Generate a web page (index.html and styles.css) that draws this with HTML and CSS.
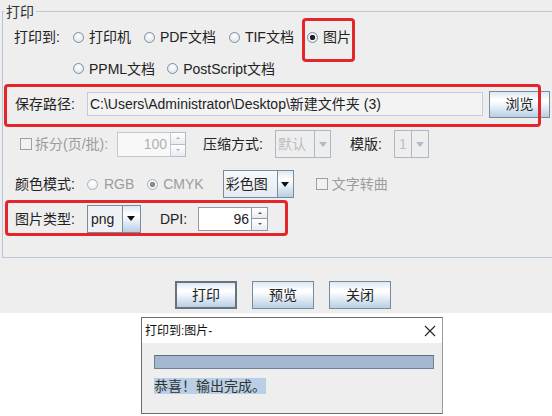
FILE: index.html
```html
<!DOCTYPE html>
<html>
<head>
<meta charset="utf-8">
<link rel="stylesheet" href="styles.css">
</head>
<body>
<div class="window">
  <div class="group">
    <div class="group-title">打印</div>
    <div class="row r1">
      <span class="label">打印到:</span>
      <span class="radio"><i></i>打印机</span>
      <span class="radio"><i></i>PDF文档</span>
      <span class="radio"><i></i>TIF文档</span>
      <span class="radio on"><i></i>图片</span>
    </div>
    <div class="row r2">
      <span class="radio"><i></i>PPML文档</span>
      <span class="radio"><i></i>PostScript文档</span>
    </div>
    <div class="row r3">
      <span class="label">保存路径:</span>
      <span class="field path">C:\Users\Administrator\Desktop\新建文件夹 (3)</span>
      <span class="btn browse">浏览</span>
    </div>
    <div class="row r4">
      <span class="check dis"><i></i>拆分(页/批):</span>
      <span class="spinner dis split"><span class="sp-field">100</span><span class="sp-btns"><b class="up"></b><b class="down"></b></span></span>
      <span class="label zip">压缩方式:</span>
      <span class="combo dis cb-zip"><span class="cb-main">默认</span><span class="cb-arrow"></span></span>
      <span class="label tpl">模版:</span>
      <span class="combo dis cb-tpl"><span class="cb-main">1</span><span class="cb-arrow"></span></span>
    </div>
    <div class="row r5">
      <span class="label">颜色模式:</span>
      <span class="radio dis rgb"><i></i>RGB</span>
      <span class="radio dis on cmyk"><i></i>CMYK</span>
      <span class="combo cb-color"><span class="cb-main">彩色图</span><span class="cb-arrow"></span></span>
      <span class="check dis curve"><i></i>文字转曲</span>
    </div>
    <div class="row r6">
      <span class="label">图片类型:</span>
      <span class="combo cb-png"><span class="cb-main">png</span><span class="cb-arrow"></span></span>
      <span class="label dpi">DPI:</span>
      <span class="spinner dpi-sp"><span class="sp-field">96</span><span class="sp-btns"><b class="up"></b><b class="down"></b></span></span>
    </div>
    <span class="mark m1"></span>
    <span class="mark m2"></span>
    <span class="mark m3"></span>
  </div>
  <div class="actions">
    <span class="btn act focus">打印</span>
    <span class="btn act">预览</span>
    <span class="btn act">关闭</span>
  </div>
</div>
<div class="desk">
  <div class="dialog">
    <div class="dlg-title">
      <span>打印到:图片-</span>
      <svg class="close" width="12" height="12" viewBox="0 0 12 12"><path d="M1 1L11 11M11 1L1 11" stroke="#222" stroke-width="1.1" fill="none"/></svg>
    </div>
    <div class="dlg-body">
      <div class="progress"></div>
      <div class="msg"><span>恭喜！输出完成。</span></div>
    </div>
  </div>
</div>
</body>
</html>
```

FILE: styles.css
```css
body {
  margin: 0;
  width: 552px;
  height: 416px;
  overflow: hidden;
  background: #fff;
  font: 14px/20px "Liberation Sans", "Noto Sans CJK SC", sans-serif;
  color: #222;
}

.window {
  background: #eeeeee;
  height: 313px;
  overflow: hidden;
}

.group {
  position: relative;
  margin: 11px -10px 0 2px;
  border: 1px solid #b9c8d7;
  height: 245px;
}

.group-title {
  width: fit-content;
  margin: -9px 0 0 1px;
  padding: 0 2px;
  height: 18px;
  line-height: 18px;
  background: #eeeeee;
  color: #333;
}

.row {
  display: flex;
  align-items: center;
  white-space: nowrap;
}

.r1 { height: 32px; padding-left: 11px; gap: 13px; }
.r2 { height: 31px; padding-left: 70px; gap: 12px; }
.r3 { height: 40px; padding-left: 12px; }
.r4 { height: 40px; padding-left: 17px; }
.r5 { height: 40px; padding-left: 12px; }
.r6 { height: 29px; padding-left: 12px; }

.label { color: #222; }

/* radio buttons */
.radio {
  display: inline-flex;
  align-items: center;
  gap: 5px;
}
.radio i {
  width: 9px;
  height: 9px;
  border: 1px solid #7f8d9b;
  border-radius: 50%;
  background: radial-gradient(circle at 50% 35%, #ffffff 0, #d6e0ea 100%);
}
.radio.on i {
  background: radial-gradient(circle, #222 0, #222 2.4px, #f4f7fa 3px, #cfdae6 100%);
}
.radio.dis { color: #9c9c9c; }
.radio.dis i {
  border-color: #a9b2bb;
  background: radial-gradient(circle at 50% 35%, #ffffff 0, #e4e8ec 100%);
}
.radio.dis.on i {
  background: radial-gradient(circle, #8a8a8a 0, #8a8a8a 2.4px, #f4f6f8 3px, #e0e5ea 100%);
}

/* checkboxes */
.check {
  display: inline-flex;
  align-items: center;
  gap: 3px;
}
.check i {
  width: 10px;
  height: 10px;
  border: 1px solid #8e8e8e;
  background: #f2f2f2;
}
.check.dis { color: #9c9c9c; }
.check.dis i { border-color: #a0a0a0; }

/* text field */
.field {
  box-sizing: border-box;
  height: 24px;
  line-height: 22px;
  border: 1px solid #c6c9de;
  background: #f3f3f3;
  padding-left: 2px;
  color: #222;
}
.path { width: 396px; margin-left: 12px; }

/* buttons */
.btn {
  box-sizing: border-box;
  display: inline-flex;
  align-items: center;
  justify-content: center;
  border: 1px solid #7a8a99;
  background: linear-gradient(#dde8f3 0%, #ffffff 32%, #f6f9fc 45%, #b8cfe5 100%);
  color: #222;
}
.browse { width: 61px; height: 27px; margin-left: 6px; }

/* spinner */
.spinner {
  display: flex;
  height: 25px;
}
.sp-field {
  box-sizing: border-box;
  width: 54px;
  height: 100%;
  border: 1px solid #c3c8d2;
  background: #f8f8f8;
  text-align: right;
  padding-right: 3px;
  line-height: 23px;
  color: #b0b0b0;
}
.sp-btns {
  box-sizing: border-box;
  width: 15px;
  display: flex;
  flex-direction: column;
  border: 1px solid #b3bcc6;
  border-left: none;
}
.sp-btns b {
  flex: 1;
  display: flex;
  align-items: center;
  justify-content: center;
  background: linear-gradient(#ffffff, #e6ecf2);
}
.sp-btns b + b { border-top: 1px solid #b3bcc6; }
.sp-btns b::after {
  content: "";
  border-left: 2px solid transparent;
  border-right: 2px solid transparent;
}
.sp-btns .up::after { border-bottom: 2px solid #b0b0b0; }
.sp-btns .down::after { border-top: 2px solid #b0b0b0; }

.split { margin-left: 9px; }

.dpi-sp { height: 24px; margin-left: 11px; }
.dpi-sp .sp-field {
  background: #ffffff;
  border-color: #8f9aa6;
  color: #222;
  line-height: 22px;
  padding-right: 2px;
}
.dpi-sp .sp-btns { width: 16px; border-color: #8f9aa6; }
.dpi-sp .sp-btns b + b { border-top-color: #8f9aa6; }
.dpi-sp .up::after { border-bottom-color: #555; }
.dpi-sp .down::after { border-top-color: #555; }

/* combos */
.combo {
  display: flex;
  height: 28px;
  box-sizing: border-box;
  border: 1px solid #7a8a99;
}
.cb-main {
  box-sizing: border-box;
  height: 100%;
  line-height: 26px;
  padding-left: 3px;
  background: linear-gradient(#f7f9fb, #e3eaf1);
  border-right: 1px solid #7a8a99;
}
.cb-arrow {
  flex: 1;
  display: flex;
  align-items: center;
  justify-content: center;
  background: linear-gradient(#dde8f3 0%, #ffffff 32%, #f6f9fc 45%, #b8cfe5 100%);
}
.cb-arrow::after {
  content: "";
  border-left: 4px solid transparent;
  border-right: 4px solid transparent;
  border-top: 5px solid #111;
}
.combo.dis { border-color: #aeb8c2; }
.combo.dis .cb-main {
  background: #eeeeee;
  color: #bdbdbd;
  border-right-color: #aeb8c2;
}
.combo.dis .cb-arrow { background: #eeeeee; }
.combo.dis .cb-arrow::after { border-top-color: #a9bdd1; }

.zip { margin-left: 17px; }
.cb-zip { margin-left: 12px; width: 56px; }
.cb-zip .cb-main { width: 39px; padding-left: 2px; }
.tpl { margin-left: 19px; }
.cb-tpl { margin-left: 12px; width: 35px; }
.cb-tpl .cb-main { width: 17px; padding-left: 4px; }

.rgb { margin-left: 12px; }
.radio.rgb { gap: 6px; }
.cmyk { margin-left: 13px; }
.cb-color { margin-left: 19px; width: 71px; }
.cb-color .cb-main { width: 54px; padding-left: 2px; }
.curve { margin-left: 22px; gap: 4px; }

.cb-png { margin-left: 12px; width: 54px; }
.cb-png .cb-main { width: 35px; background: #eef1f5; }
.dpi { margin-left: 19px; }

/* annotation marks */
.mark {
  position: absolute;
  box-sizing: border-box;
  border: 3px solid #e3262a;
  border-radius: 4px;
}
.m1 { left: 299px; top: 6px; width: 53px; height: 44px; }
.m2 { left: 1px; top: 72px; width: 537px; height: 43px; }
.m3 { left: 2px; top: 188px; width: 283px; height: 36px; }

/* action buttons */
.actions {
  display: flex;
  gap: 15px;
  margin-top: 23px;
  padding-left: 175px;
}
.act { width: 62px; height: 28px; }
.act.focus { border: 2px solid #66737f; }

/* progress dialog */
.desk { padding-top: 4px; }
.dialog {
  box-sizing: border-box;
  width: 302px;
  margin-left: 141px;
  border: 1px solid #6d6d6d;
  border-right-color: #9a9a9a;
}
.dlg-title {
  height: 25px;
  background: #ffffff;
  display: flex;
  align-items: center;
  justify-content: space-between;
  padding: 0 6px 0 3px;
  font-size: 12px;
  color: #111;
}
.close { display: block; margin-top: 1px; }
.dlg-body {
  background: #eeeeee;
  height: 70px;
  padding: 12px 8px 0 12px;
  box-sizing: border-box;
}
.progress {
  box-sizing: border-box;
  height: 14px;
  border: 1px solid #6f8093;
  border-top-color: #5f6f80;
  background: #a3b8cf;
}
.msg {
  margin-top: 7px;
  line-height: 20px;
}
.msg span {
  background: #b8cfe5;
  color: #333;
}
```
